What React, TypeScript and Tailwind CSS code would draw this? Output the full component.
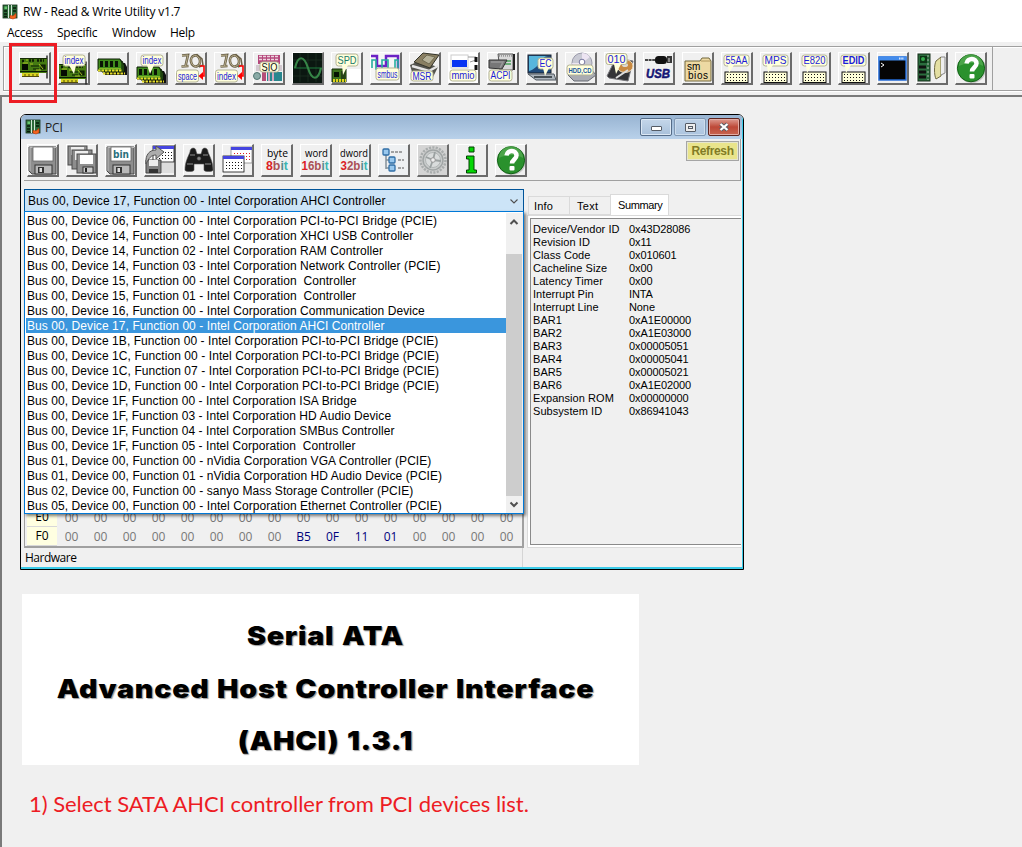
import React from "react";

type Box = { x: number; y: number; w: number; h: number };

const Label = ({ x, y, w, h, t, c = "#1c1cd8", fs = 11, tail, bold }: Box & { t: string; c?: string; fs?: number; tail?: string; bold?: boolean }) => (
  <g>
    <rect x={x} y={y} width={w} height={h} rx="2.5" fill="#ffffdc" stroke="#b4b496" strokeWidth="1" />
    {tail && <path d={tail} fill="#ffffdc" />}
    <text x={x + 1.5} y={y + h / 2 + fs * 0.36} textLength={w - 3} lengthAdjust="spacingAndGlyphs" fontSize={fs} fill={c} fontWeight={bold ? 700 : 400} fontFamily="Liberation Sans, sans-serif">{t}</text>
  </g>
);

const Card = ({ dy = 0 }: { dy?: number }) => (
  <g transform={`translate(0 ${dy})`}>
    <path d="M28 3.5v23" stroke="#222" strokeWidth="1.4" />
    <rect x="1" y="6" width="27" height="15" fill="#457b12" />
    <path d="M1 6.5h27" stroke="#152b05" />
    <path d="M3 21h17v3H3z" fill="#d9d321" />
    <path d="M3 24.5h17M6 22v3M10 22v3M14 22v3M18 22v3" stroke="#534c0a" />
    <rect x="3" y="12" width="6" height="6" fill="#050b02" />
    <path d="M3 9h3M10 8.500h6M18 8.500h7" stroke="#0b1a03" strokeWidth="2.500" strokeDasharray="2 1" />
    <path d="M12 14h8M14 17h6M22 13h4v4h-4zM1 19.5h27" stroke="#0b1a03" strokeWidth="1.2" fill="#182c06" />
    <path d="M7 8h2M20 12l4 5M11 12h3M17 18h5M4 11h5" stroke="#b6c929" strokeWidth=".9" />
  </g>
);

const Dimm = ({ dy = 0 }: { dy?: number }) => (
  <g transform={`translate(0 ${dy})`}>
    <path d="M8 11h20l2 4v8H8z" fill="#111" />
    <path d="M5 9h20l2 4v7H5z" fill="#376d18" stroke="#0a1a04" />
    <path d="M1 7h22l2 4v8H1z" fill="#3f8a1c" stroke="#0a1a04" />
    <path d="M3 9h3v6H3zM8 9h3v6H8zM13 9h3v6h-3zM18 9h3v6h-3z" fill="#0a1405" />
    <path d="M1 18.5h24M6 21.5h22" stroke="#e4dc28" strokeWidth="2" strokeDasharray="2.5 1" />
    <path d="M2 16.5h22" stroke="#a4c52b" strokeWidth=".7" />
  </g>
);

const IoRope = () => (
  <g fill="none">
    <g stroke="#6a6047" strokeWidth="2.6">
      <path d="M7 3.500l6-.5-2.500 11M6.500 14.500l7-.5" />
      <ellipse cx="20.500" cy="9" rx="4.500" ry="5.500" transform="rotate(-12 20.500 9)" />
      <path d="M17 4l5-1.500 5 4.500 1 6-4 2" strokeWidth="1.500" />
    </g>
    <g stroke="#c0b594" strokeWidth=".9">
      <path d="M7 3.500l6-.5-2.500 11M6.500 14.500l7-.5" />
      <ellipse cx="20.500" cy="9" rx="4.500" ry="5.500" transform="rotate(-12 20.500 9)" />
    </g>
  </g>
);
const RedArrow = () => (
  <g><path d="M25 14h4v10h-2" fill="none" stroke="#f00" strokeWidth="1.6" /><path d="M23.500 24l4.500-4v8z" fill="#f00" /></g>
);

const Table = ({ t, bold }: { t: string; bold?: boolean }) => (
  <g>
    <rect x="4" y="20" width="23" height="10.500" fill="#ffffd8" stroke="#111" />
    <path d="M6 22.500h19M6 25.500h19M6 28.500h19" stroke="#111" strokeWidth="1" strokeDasharray="1 2" />
    <Label x={3} y={3} w={25} h={11} t={t} fs={11} bold={bold} tail="M7 13l1 8 5-8z" />
  </g>
);

const Help = () => (
  <g>
    <circle cx="17" cy="17" r="14" fill="#777" opacity=".35" />
    <circle cx="16" cy="16.200" r="13.600" fill="#2a912d" stroke="#126116" />
    <path d="M4 14a12 12 0 0 1 24 0c-6-4-16-4-24 0z" fill="#66b760" opacity=".55" />
    <path d="M11.500 11.500c1-6 10-6 10 0 0 4-4.500 4-4.500 8" fill="none" stroke="#fff" strokeWidth="4.500" />
    <rect x="14.500" y="22" width="5" height="4.500" rx="1" fill="#fff" />
  </g>
);

const Floppy = ({ bin }: { bin?: boolean }) => (
  <g>
    <path d="M3 3h26v27H5l-3-3V3z" fill="#8e8e8e" stroke="#484848" />
    <path d="M3 3.500h26M3 3v24" stroke="#bbb" />
    <rect x="6" y="3" width="20" height="14" fill="#fff" stroke="#666" strokeWidth=".8" />
    <rect x="8" y="21" width="17" height="9" fill="#b9b9b9" stroke="#333" />
    <rect x="11" y="23" width="6" height="6" fill="#333" /><rect x="12.500" y="24" width="2.500" height="4" fill="#ddd" />
    {bin && <text x="8" y="13.500" textLength="16" lengthAdjust="spacingAndGlyphs" fontFamily="DejaVu Sans, sans-serif" fontSize="11" fontWeight="700" fill="#2b6f7b">bin</text>}
  </g>
);

const Bits = ({ a, n }: { a: string; n: string }) => (
  <g>
    <text x={a === "byte" ? 6 : a === "word" ? 5 : 1} y="13" textLength={a === "byte" ? 21 : a === "word" ? 23 : 28} lengthAdjust="spacingAndGlyphs" fontSize="11" fontFamily="Open Sans, sans-serif" fill="#000">{a}</text>
    <text x={n === "8" ? 5 : 1.5} y="26" textLength={n === "8" ? 22 : 27} lengthAdjust="spacingAndGlyphs" fontSize="12" fontWeight="700" fontFamily="Liberation Sans, sans-serif"><tspan fill="#dc2024">{n[0]}</tspan><tspan fill="#ab5055">{n.slice(1)}b</tspan><tspan fill="#54898b">i</tspan><tspan fill="#3cb5b1">t</tspan></text>
  </g>
);

const Win = ({ x, y, red }: { x: number; y: number; red?: boolean }) => (
  <g>
    <rect x={x} y={y} width="21" height="16" fill="#fff" stroke={red ? "#888" : "#111"} strokeWidth=".8" />
    <path d={`M${x} ${y + 1.5}h21`} stroke="#4545e0" strokeWidth="3" />
    <path d={`M${x + 3} ${y + 6.5}h16M${x + 3} ${y + 9.5}h16M${x + 3} ${y + 12.5}h16`} stroke={red ? "#e02020" : "#111"} strokeDasharray="1 2" />
  </g>
);

const mainIcons: React.ReactNode[] = [
  <Card />,
  <g><Card dy={6} /><Label x={5} y={3} w={22} h={11} t="index" tail="M11 13l5 9 2-9z" /></g>,
  <Dimm />,
  <g><Dimm dy={8} /><Label x={5} y={3} w={22} h={11} t="index" tail="M11 13l3 9 4-9z" /></g>,
  <g><IoRope /><Label x={1.5} y={18} w={22} h={12} t="space" /><RedArrow /></g>,
  <g><IoRope /><Label x={1.5} y={18} w={22} h={12} t="index" /><RedArrow /></g>,
  <g>
    <path d="M5 3h22v9H5z" fill="#b5487c" /><path d="M6 4.500h20M6 7.500h20" stroke="#eed5df" strokeWidth="1.500" strokeDasharray="3 1" /><path d="M3 13h26v6H3z" fill="#d3c9d0" />
    <rect x="14" y="20" width="15" height="9" fill="#28878e" /><circle cx="4" cy="24" r="3.500" fill="#8aaba7" stroke="#507571" /><rect x="9" y="20" width="4" height="9" fill="#b54f78" /><path d="M16 20v9M20 20v9" stroke="#d2a7bd" strokeWidth="2" />
    <Label x={7} y={10} w={19} h={10} t="SIO" c="#111" fs={10} />
  </g>,
  <g><rect x="1" y="1" width="29" height="30" fill="#0b1711" /><path d="M1 8h29M1 24h29M8 1v29M16 1v29M24 1v29" stroke="#1d3123" strokeWidth=".7" /><path d="M2 16h28" stroke="#1e7a3e" /><path d="M3 16c3-13 9-13 13 0s10 13 13 0" fill="none" stroke="#368547" strokeWidth="2.200" /></g>,
  <g><path d="M1 17h14v13H1z" fill="#3c731c" stroke="#142b0b" /><path d="M3 20h5v5H3z" fill="#061403" /><path d="M11 19v8M13 18v9" stroke="#111" /><path d="M2 28.500h13" stroke="#e0d020" strokeWidth="3" strokeDasharray="2 1" /><path d="M16 17h14v13H16z" fill="#fff" /><Label x={5} y={2} w={22} h={12} t="SPD" c="#1b796a" tail="M11 13l1 10 5-10z" /></g>,
  <g fill="none"><rect x="1" y="1" width="29" height="30" fill="#f6f6f6" /><path d="M1 4h6v10h9V4h12v13" stroke="#6c22c5" strokeWidth="2.500" /><path d="M2 16V8h4v9h6V8h6v9h7V8h3v9" stroke="#26af9f" strokeWidth="1.600" /><Label x={6} y={16} w={23} h={12} t="smbus" /></g>,
  <g><path d="M1 13l9-4 19 6-5 10-21-5z" fill="#55554f" /><path d="M3 14l17 5 9-5" stroke="#e6e6e6" fill="none" strokeWidth="2.500" /><path d="M5 10L14 1l16 2-9 13z" fill="#897f62" stroke="#343429" /><path d="M13 8l5-5 8 2-6 7z" fill="#b6b299" stroke="#6f6a51" /><Label x={2} y={19} w={22} h={10} t="MSR" fs={10} /></g>,
  <g><rect x="1" y="1" width="29" height="30" fill="#fff" /><rect x="3" y="3" width="17" height="13" fill="#fff" stroke="#ccc" /><rect x="4" y="8" width="15" height="7" fill="#0834f3" /><path d="M20 5h8M22 10l6-2" stroke="#999" /><path d="M26.500 5h3v5h-3zM26.500 13h3v5h-3z" fill="#111" /><Label x={2} y={18} w={26} h={11} t="mmio" /></g>,
  <g><path d="M11 2h15v16H13z" fill="#d9d9d9" stroke="#555" /><path d="M12 3.500h14" stroke="#999" strokeWidth="2.500" strokeDasharray="1 1" /><path d="M18 9h6M18 12h6" stroke="#49a05a" strokeWidth="1.300" /><path d="M2 16V8h18l-5 9z" fill="#777" stroke="#333" /><path d="M4 10h12l-3 6" stroke="#999" fill="none" strokeWidth="1.500" /><path d="M27 2v16" stroke="#222" strokeWidth="2" /><Label x={2} y={18} w={23} h={11} t="ACPI" /></g>,
  <g><rect x="2" y="3" width="23" height="18" fill="#204b7b" stroke="#182231" /><path d="M3 4h19c-7 0-9 13-19 15z" fill="#58b6dc" /><path d="M2 22h26l2 6H10z" fill="#adb5bd" stroke="#505860" /><path d="M8 25h18" stroke="#464f55" strokeWidth="2" /><Label x={12} y={6} w={15} h={11} t="EC" tail="M17 16l2 8 4-8z" /></g>,
  <g><path d="M3 23l8-7h14l6 7-8 6H9z" fill="#a9abb2" stroke="#666b73" /><circle cx="17" cy="11" r="10" fill="#c9cad4" stroke="#9a9aab" /><path d="M17 1a10 10 0 0 1 8 4l-8 6zM10 18a10 10 0 0 1-3-7h10z" fill="#ece4f2" /><circle cx="17" cy="10" r="2.800" fill="#fff" stroke="#7777a0" /><Label x={2} y={13} w={26} h={10} t="HDD,CD" fs={8} bold c="#1b579d" /></g>,
  <g><path d="M3 24L12 6l17 3-5 20-19-3z" fill="#343437" stroke="#77777b" /><ellipse cx="21" cy="14" rx="8" ry="6.500" fill="#c98a41" stroke="#eddcc0" /><ellipse cx="21" cy="13" rx="3" ry="2" fill="#ded9d0" /><path d="M12 26l12-8" stroke="#ddd" strokeWidth="2" /><Label x={2} y={1.5} w={21} h={11} t="010" tail="M10 12l2 10 5-10z" /></g>,
  <g><path d="M2 8h14" stroke="#111" strokeWidth="1.500" strokeDasharray="3 .6" /><rect x="12" y="4" width="12" height="8" rx="3.500" fill="#111" /><path d="M24 4h5v7h-5z" fill="#383838" /><path d="M26 6v4" stroke="#ddd" /><text x="3" y="26" textLength="24" lengthAdjust="spacingAndGlyphs" fontFamily="Liberation Sans, sans-serif" fontSize="13" fontWeight="700" fontStyle="italic" fill="#151574" stroke="#151574" strokeWidth=".5">USB</text></g>,
  <g><path d="M3 29V9h15l2-3h7l2 3v20z" fill="#edd9a3" stroke="#72683e" /><path d="M19 9h9" stroke="#b0965d" /><text x="5" y="18" fontSize="10" fontFamily="Liberation Sans, sans-serif">sm</text><text x="6" y="27" fontSize="10" textLength="20" fontFamily="Liberation Sans, sans-serif">bios</text></g>,
  <Table t="55AA" />, <Table t="MPS" />, <Table t="E820" />, <Table t="EDID" bold />,
  <g><rect x="2" y="5" width="27" height="23" fill="#050505" stroke="#236bd7" strokeWidth="1.500" /><path d="M1.500 6.500h28" stroke="#438cec" strokeWidth="4" /><path d="M22 6.500h5" stroke="#d2e4ff" strokeWidth="2" strokeDasharray="1.500 .8" /><path d="M4 11l3 2-3 2" fill="none" stroke="#fff" /></g>,
  <g><rect x="2" y="2" width="12" height="27" fill="#2a6c3d" stroke="#19301d" /><rect x="4" y="4" width="7" height="7" fill="#0d3215" /><circle cx="7" cy="7" r="2" fill="#37ac4e" /><path d="M3 15h7M3 20h7M3 25h7" stroke="#101010" strokeWidth="3" /><path d="M12 3v25" stroke="#a7b5a9" strokeDasharray="2 2" /><path d="M20 9l5-4v19l-5 3c-2-4-2-14 0-18z" fill="#e4dfa2" stroke="#6f6a44" /><path d="M25 5h4v16l-4 2" fill="#eee" stroke="#888" /></g>,
  <Help />,
];

const pciIcons: React.ReactNode[] = [
  <Floppy />,
  <g><rect x="2" y="2" width="19" height="19" fill="#929292" stroke="#4a4a4a" /><rect x="5" y="3" width="13" height="8" fill="#eee" /><rect x="6" y="6" width="20" height="19" fill="#8d8d8d" stroke="#4a4a4a" /><rect x="9" y="7" width="13" height="9" fill="#eee" /><rect x="11" y="10" width="19" height="19" fill="#909090" stroke="#4a4a4a" /><rect x="14" y="11" width="13" height="9" fill="#fff" /><rect x="17" y="23" width="10" height="6" fill="#ccc" stroke="#333" /><path d="M20 24v4" stroke="#222" strokeWidth="2" /></g>,
  <Floppy bin />,
  <g><Win x={9} y={2} /><path d="M2 16h15v13H2z" fill="#828282" stroke="#444" /><path d="M5 16h9v6H5z" fill="#eee" /><path d="M5 25h9v4H5z" fill="#333" /><path d="M18 19h12v10H18z" fill="#ddd" /><path d="M2 20C1 10 6 6 12 6V2l8 6-8 7v-4c-5 0-7 3-10 9z" fill="#acacac" stroke="#555" /></g>,
  <g fill="#1b1b1b" stroke="#555" strokeWidth=".6">
    <path d="M2 26c0-8 3-13 5-18 0-5 6-5 6-1l1 3h4l1-3c0-4 6-4 6 1 2 5 5 10 5 18 0 2-9 2-9 0v-6h-10v6c0 2-9 2-9 0z" />
    <path d="M7 11h5M20 11h5M4 20h6M22 20h6" stroke="#8f8f8f" strokeWidth="1.200" /><circle cx="16" cy="14.500" r="1.800" fill="#888" />
  </g>,
  <g><Win x={9} y={3} red /><Win x={1} y={12} /></g>,
  <Bits a="byte" n="8" />, <Bits a="word" n="16" />, <Bits a="dword" n="32" />,
  <g><rect x="1" y="1" width="29" height="30" fill="#eef0f2" /><path d="M8 9v16M8 16h4M8 24h4" stroke="#83909a" fill="none" strokeWidth="1.500" />
    {[[5, 5], [11, 13], [11, 21]].map(([x, y]) => <rect key={y} x={x} y={y} width="6" height="6" rx="1" fill="#99c8ee" stroke="#2f6da6" strokeWidth="1.300" />)}
    <path d="M13 8h12M20 16h6M20 24h6" stroke="#555" strokeDasharray="3 1" /></g>,
  <g><rect x="1" y="1" width="29" height="30" fill="#d4d4d4" /><circle cx="16" cy="16" r="12.500" fill="none" stroke="#a9adad" strokeWidth="2.500" strokeDasharray="2.200 1.200" /><circle cx="16" cy="16" r="10" fill="#c9cccc" stroke="#a0a5a5" strokeWidth="1.500" /><circle cx="16" cy="16" r="7.500" fill="#d9dcdc" stroke="#b2b6b6" /><path d="M9 13l7 3 2-8M16 16l-3 8M16 16l8 1" stroke="#9ba1a1" strokeWidth="1.800" fill="none" /><circle cx="16" cy="16" r="2.300" fill="#eee" stroke="#999" /></g>,
  <g fill="#04d604" stroke="#053e05" strokeWidth="1"><path d="M13 3h5v5h-5zM10.500 12h7.500v14h2.500v3h-10v-3h2.500V15h-2.500z" /></g>,
  <Help />,
];

const Tool = ({ children }: { children: React.ReactNode }) => (
  <button className="block h-[33px] w-8 shrink-0 border-t border-l border-r-2 border-b-2 border-t-white border-l-white border-r-[#6b6b6b] border-b-[#6b6b6b] bg-[#f0f0f0]">
    <svg className="block h-[30px] w-[29px] overflow-visible" viewBox="1 1 29 30">{children}</svg>
  </button>
);

const AppIcon = () => (
  <svg className="block h-4 w-4 shrink-0" viewBox="0 0 16 16">
    <rect x="1" y="1" width="14" height="13" fill="#2f6b3b" stroke="#16331b" strokeWidth=".8" />
    <path d="M6.500 1v13M9.500 1v11" stroke="#d4e6d7" /><path d="M2 7h3M2 10h3M2 12.500h3M11 4h3M11 7h3" stroke="#071b09" strokeWidth="1.400" />
    <rect x="2.500" y="2.500" width="2.500" height="2.500" fill="#65c66c" />
    <path d="M8 11.500l3 .5 3-2.500v4l-3 1.500-3-1z" fill="#f3661e" stroke="#c9350c" strokeWidth=".6" />
  </svg>
);

const devices = [
  "Bus 00, Device 06, Function 00 - Intel Corporation PCI-to-PCI Bridge (PCIE)",
  "Bus 00, Device 14, Function 00 - Intel Corporation XHCI USB Controller",
  "Bus 00, Device 14, Function 02 - Intel Corporation RAM Controller",
  "Bus 00, Device 14, Function 03 - Intel Corporation Network Controller (PCIE)",
  "Bus 00, Device 15, Function 00 - Intel Corporation  Controller",
  "Bus 00, Device 15, Function 01 - Intel Corporation  Controller",
  "Bus 00, Device 16, Function 00 - Intel Corporation Communication Device",
  "Bus 00, Device 17, Function 00 - Intel Corporation AHCI Controller",
  "Bus 00, Device 1B, Function 00 - Intel Corporation PCI-to-PCI Bridge (PCIE)",
  "Bus 00, Device 1C, Function 00 - Intel Corporation PCI-to-PCI Bridge (PCIE)",
  "Bus 00, Device 1C, Function 07 - Intel Corporation PCI-to-PCI Bridge (PCIE)",
  "Bus 00, Device 1D, Function 00 - Intel Corporation PCI-to-PCI Bridge (PCIE)",
  "Bus 00, Device 1F, Function 00 - Intel Corporation ISA Bridge",
  "Bus 00, Device 1F, Function 03 - Intel Corporation HD Audio Device",
  "Bus 00, Device 1F, Function 04 - Intel Corporation SMBus Controller",
  "Bus 00, Device 1F, Function 05 - Intel Corporation  Controller",
  "Bus 01, Device 00, Function 00 - nVidia Corporation VGA Controller (PCIE)",
  "Bus 01, Device 00, Function 01 - nVidia Corporation HD Audio Device (PCIE)",
  "Bus 02, Device 00, Function 00 - sanyo Mass Storage Controller (PCIE)",
  "Bus 05, Device 00, Function 00 - Intel Corporation Ethernet Controller (PCIE)",
];

const summary: [string, string][] = [
  ["Device/Vendor ID", "0x43D28086"], ["Revision ID", "0x11"], ["Class Code", "0x010601"], ["Cacheline Size", "0x00"],
  ["Latency Timer", "0x00"], ["Interrupt Pin", "INTA"], ["Interrupt Line", "None"], ["BAR1", "0xA1E00000"], ["BAR2", "0xA1E03000"],
  ["BAR3", "0x00005051"], ["BAR4", "0x00005041"], ["BAR5", "0x00005021"], ["BAR6", "0xA1E02000"], ["Expansion ROM", "0x00000000"], ["Subsystem ID", "0x86941043"],
];

const zero = Array.from({ length: 16 }, () => "00");
const hexRows: [string, string[]][] = [
  ["E0", zero],
  ["F0", ["00", "00", "00", "00", "00", "00", "00", "00", "B5", "0F", "11", "01", "00", "00", "00", "00"]],
];

const Chevron = ({ up, thin }: { up?: boolean; thin?: boolean }) => (
  <svg className="block h-4 w-4" viewBox="0 0 16 16"><path d={up ? "M4.500 10L8 6.500l3.500 3.500" : "M4.500 6.500L8 10l3.500-3.500"} fill="none" stroke="#505050" strokeWidth={thin ? 1.1 : 2} /></svg>
);

const ComboBox = () => (
  <div className="relative h-[23px] w-[500px] text-[12px]">
    <div className="flex h-[23px] items-center justify-between border border-[#005499] bg-[#cce4f7] pr-px pl-[3px] tracking-[0.07px]">
      <span className="whitespace-pre">{devices[7]}</span>
      <Chevron thin />
    </div>
    <div className="absolute top-[22px] left-0 z-10 flex h-[303px] w-[500px] border border-[#0078d7] bg-white pt-px tracking-[0.07px] shadow-[2px_2px_3px_rgba(0,0,0,0.5)]">
      <ul className="h-[300px] w-[481px] overflow-hidden pl-px">
        {devices.map((d, i) => (
          <li key={i} className={i === 7 ? "h-[15px] bg-[#3a96dd] pl-px leading-[16px] whitespace-pre text-white" : "h-[15px] pl-px leading-[16px] whitespace-pre"}>{d}</li>
        ))}
      </ul>
      <div className="flex w-[17px] flex-col justify-between bg-[#f0f0f0]">
        <div className="h-[41px] pt-px"><Chevron up /></div>
        <div className="mr-px grow bg-[#cdcdcd]" />
        <div className="h-[17px]"><Chevron /></div>
      </div>
    </div>
  </div>
);

const Caption = () => (
  <div className="flex h-[24px] items-center bg-linear-to-b from-[#98b4d2] to-[#b9d1ea] pr-[2px] pl-1">
    <AppIcon />
    <span className="mt-px ml-[4px] font-['Open_Sans',sans-serif] text-[12px] tracking-[-0.2px] text-[#222]">PCI</span>
    <div className="ml-auto flex gap-[2px]">
      <button className="flex h-[18px] w-[32px] items-center justify-center rounded-[2px] border border-[#556c88] bg-linear-to-b from-[#c5d7ea] to-[#a8c0da] shadow-[inset_0_0_0_1px_#dce8f4]"><span className="mt-[3px] h-[5px] w-[11px] rounded-[1px] border border-[#555c66] bg-white" /></button>
      <button className="flex h-[18px] w-[32px] items-center justify-center rounded-[2px] border border-[#8097b2] bg-linear-to-b from-[#bed2e7] to-[#adc5df] shadow-[inset_0_0_0_1px_#cddded]"><span className="flex h-[9px] w-[11px] items-center justify-center rounded-[1px] border border-[#555c66] bg-[#eee]"><span className="h-[3px] w-[5px] border border-[#555c66]" /></span></button>
      <button className="flex h-[18px] w-[32px] items-center justify-center rounded-[2px] border border-[#5f2620] bg-linear-to-b from-[#dd9a90] via-[#bd4837] to-[#c86551] shadow-[inset_0_0_0_1px_#e3aca4]">
        <svg className="h-[10px] w-[12px]" viewBox="0 0 12 10"><path d="M2.500 2l7 6M9.500 2l-7 6" stroke="#555c66" strokeWidth="4" /><path d="M2.500 2l7 6M9.500 2l-7 6" stroke="#fff" strokeWidth="2.300" /></svg>
      </button>
    </div>
  </div>
);

export default function App() {
  return (
    <div className="relative flex h-[847px] w-[1022px] flex-col overflow-hidden bg-[#f0f0f0] font-['Liberation_Sans',Arial,sans-serif] text-black">
      <header className="h-[42px] bg-white pt-px font-['Open_Sans',sans-serif] text-[12px]">
        <div className="flex h-[21px] items-center pl-[2px]"><AppIcon /><span className="ml-[5px] tracking-[-0.2px]">RW - Read &amp; Write Utility v1.7</span></div>
        <nav className="flex h-[22px] items-center pl-[7px] tracking-[-0.25px]">
          <span className="w-[50px]">Access</span><span className="w-[55px]">Specific</span><span className="w-[58px]">Window</span><span>Help</span>
        </nav>
      </header>

      <div className="mt-[4px] ml-[3px] flex h-[45px] border-t border-b border-l border-[#a0a0a0] shadow-[inset_1px_1px_0_#fff,0_1px_0_#fff]">
        <div className="flex h-[43px] w-[989px] items-start gap-[7px] border-r border-[#a0a0a0] pt-[5px] pl-[15px]">
          {mainIcons.map((ic, i) => <Tool key={i}>{ic}</Tool>)}
        </div>
      </div>

      <main className="mt-[4px] grow border-t-2 border-l-2 border-[#7a7a7a]">
        <section className="mt-[17px] ml-[18px] h-[456px] w-[724px] overflow-hidden rounded-t-[6px] border border-black">
          <div className="h-full border-r border-b-2 border-[#3ccbe8] bg-[#f0f0f0]">
            <Caption />
            <div className="ml-[3px] flex h-[42px] w-[717px] justify-between border-r border-b border-[#a0a0a0] pt-[5px] pr-px pl-[3px]">
              <div className="flex gap-[7px]">{pciIcons.map((ic, i) => <Tool key={i}>{ic}</Tool>)}</div>
              <button className="-mt-[3px] flex h-[20px] w-[53px] items-center justify-center border border-[#a5a5a5] bg-[#e9e48b] text-[12px] font-bold text-[#817b25] shadow-[inset_0_0_0_1px_#e6e6ce]"><span className="tracking-[-0.35px]">Refresh</span></button>
            </div>

            <div className="mt-[8px] ml-[3px] flex h-[359px]">
              <div className="flex w-[500px] flex-col">
                <ComboBox />
                <div className="mt-auto h-[41px] border-r-2 border-b-2 border-l border-[#a0a0a0] bg-[#f0f0f0] pt-px pl-[2px]">
                  {hexRows.map(([k, cells]) => (
                    <div key={k} className="flex h-[19px] items-center text-[12px]">
                      <span className="flex h-full w-[30px] items-center justify-center border-b border-[#d8d8d8] bg-[#ffffe1] font-['Open_Sans',sans-serif]">{k}</span>
                      {cells.map((c, i) => <span key={i} className={c === "00" ? "w-[29px] text-center font-['Open_Sans',sans-serif] text-[#777]" : "w-[29px] text-center font-['Open_Sans',sans-serif] text-[#00007c]"}>{c}</span>)}
                    </div>
                  ))}
                </div>
              </div>

              <div className="ml-[3px] flex w-[214px] flex-col pt-[6px] text-[11px]">
                <div className="flex h-[20px] items-end pl-px">
                  <span className="h-[19px] w-[41px] border border-r-0 border-[#dadada] pl-[5px] leading-[19px] tracking-[0.2px]">Info</span>
                  <span className="h-[19px] w-[41px] border border-r-0 border-[#dadada] pl-[7px] leading-[19px] tracking-[0.3px]">Text</span>
                  <span className="h-[21px] w-[59px] border border-b-0 border-[#dadada] bg-white pl-[7px] leading-[20px] tracking-[-0.4px]">Summary</span>
                </div>
                <div className="grow border border-r-0 border-[#dadada] bg-white pt-[2px] pb-[2px] pl-[2px]">
                  <dl className="h-full border border-r-0 border-[#8a8a8a] bg-[#f0f0f0] pt-[4px] pl-[2px]">
                    {summary.map(([k, v]) => (
                      <div key={k} className="flex h-[13px] leading-[13px]"><dt className="w-[96px] tracking-[0.06px]">{k}</dt><dd className="tracking-[-0.1px]">{v}</dd></div>
                    ))}
                  </dl>
                </div>
              </div>
            </div>

            <footer className="ml-[4px] flex h-[19px] text-[12px]">
              <span className="w-[498px] border-r border-[#d5d5d5] font-['Open_Sans',sans-serif] leading-[19px] tracking-[-0.5px]">Hardware</span>
            </footer>
          </div>
        </section>

        <section className="mt-[24px] ml-[20px] h-[171px] w-[617px] bg-white pt-[16px] pr-[10px]">
          <div className="scale-x-110 text-center font-['Inter',sans-serif] text-[26px] leading-[52.5px] font-black tracking-[0.7px] [word-spacing:1px] [text-shadow:1px_1px_1px_#999]">
            <p>Serial ATA</p>
            <p className="whitespace-nowrap">Advanced Host Controller Interface</p>
            <p>(AHCI) 1.3.1</p>
          </div>
        </section>
        <p className="mt-[23px] ml-[27px] font-['Lato',sans-serif] text-[22px] leading-[32px] tracking-[-0.04px] text-[#ed1c24]">1) Select SATA AHCI controller from PCI devices list.</p>
      </main>

      <div className="absolute top-[43px] left-[9px] h-[60px] w-[48px] border-3 border-[#ed1c24]" />
    </div>
  );
}
